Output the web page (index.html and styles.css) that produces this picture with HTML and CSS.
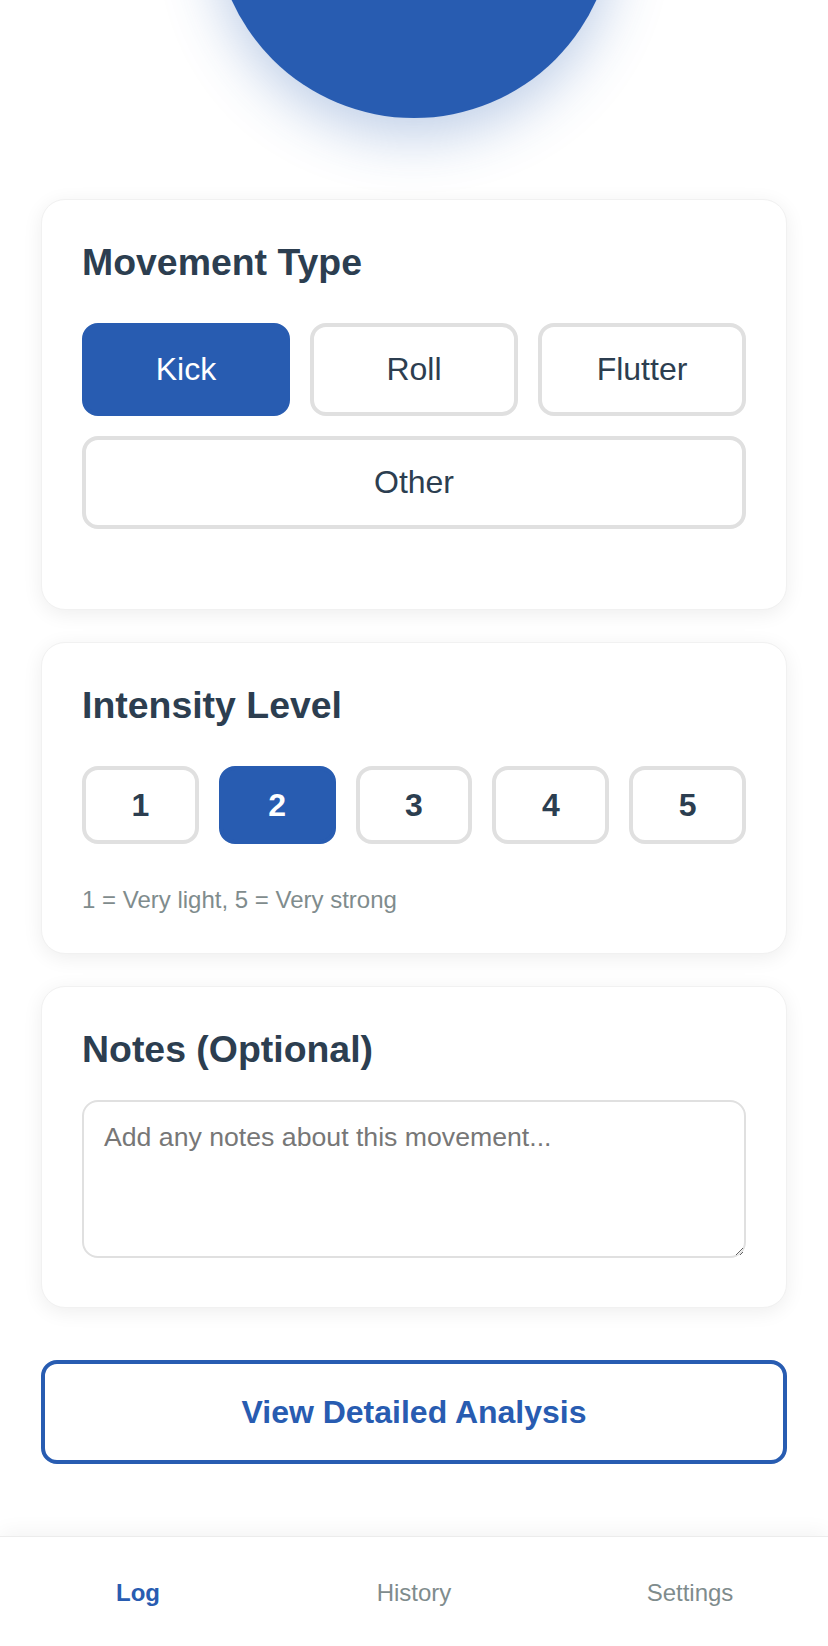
FILE: index.html
```html
<!DOCTYPE html>
<html lang="en">
<head>
<meta charset="utf-8">
<title>Log Movement</title>
<link rel="stylesheet" href="styles.css">
</head>
<body>
<main class="content">
  <div class="record-area">
    <div class="record-circle"></div>
  </div>

  <section class="card">
    <h3 class="card-title">Movement Type</h3>
    <div class="type-grid">
      <button class="opt opt-active">Kick</button>
      <button class="opt">Roll</button>
      <button class="opt">Flutter</button>
      <button class="opt opt-wide">Other</button>
    </div>
  </section>

  <section class="card">
    <h3 class="card-title">Intensity Level</h3>
    <div class="level-row">
      <button class="level">1</button>
      <button class="level level-active">2</button>
      <button class="level">3</button>
      <button class="level">4</button>
      <button class="level">5</button>
    </div>
    <p class="hint">1 = Very light, 5 = Very strong</p>
  </section>

  <section class="card">
    <h3 class="card-title card-title-notes">Notes (Optional)</h3>
    <textarea class="notes" placeholder="Add any notes about this movement..."></textarea>
  </section>

  <button class="analysis-btn">View Detailed Analysis</button>
</main>

<nav class="bottom-nav">
  <a class="nav-item nav-active">Log</a>
  <a class="nav-item">History</a>
  <a class="nav-item">Settings</a>
</nav>
</body>
</html>
```

FILE: styles.css
```css
* {
  box-sizing: border-box;
}

html, body {
  margin: 0;
  padding: 0;
}

body {
  height: 100vh;
  overflow: hidden;
  display: flex;
  flex-direction: column;
  background: #ffffff;
  font-family: "Liberation Sans", Arial, Helvetica, sans-serif;
  color: #2c3e50;
}

.content {
  flex: 1;
  min-height: 0;
  display: flex;
  flex-direction: column;
  padding: 0 41px;
}

.record-area {
  display: flex;
  justify-content: center;
  margin-top: -282px;
  margin-bottom: 81px;
}

.record-circle {
  width: 400px;
  height: 400px;
  border-radius: 50%;
  background: #285cb1;
  box-shadow: 0 18px 56px rgba(40, 92, 177, 0.3);
}

.card {
  background: #ffffff;
  border: 1px solid #f1f1f1;
  border-radius: 24px;
  padding: 40px;
  box-shadow: 0 4px 20px rgba(0, 0, 0, 0.07);
  margin-bottom: 32px;
}

.card-title {
  margin: 0 0 38px;
  font-size: 37.44px;
  line-height: 1.2;
  font-weight: 700;
  color: #2c3e50;
}

.card-title-notes {
  margin-bottom: 28px;
}

.type-grid {
  display: grid;
  grid-template-columns: 1fr 1fr 1fr;
  gap: 20px;
  margin-bottom: 40px;
}

.opt {
  font-family: inherit;
  font-size: 32px;
  line-height: 37px;
  padding: 24px 8px;
  border: 4px solid #e0e0e0;
  border-radius: 16px;
  background: #ffffff;
  color: #2c3e50;
}

.opt-wide {
  grid-column: 1 / -1;
}

.opt-active {
  background: #285cb1;
  border-color: #285cb1;
  color: #ffffff;
}

.level-row {
  display: flex;
  gap: 20px;
  margin-bottom: 42px;
}

.level {
  flex: 1;
  font-family: inherit;
  font-size: 32px;
  font-weight: 700;
  line-height: 38px;
  padding: 16px 0;
  border: 4px solid #e0e0e0;
  border-radius: 16px;
  background: #ffffff;
  color: #2c3e50;
}

.level-active {
  background: #285cb1;
  border-color: #285cb1;
  color: #ffffff;
}

.hint {
  margin: 0;
  font-size: 24px;
  line-height: 27.6px;
  color: #7f8c8d;
}

.notes {
  display: block;
  width: 100%;
  height: 158px;
  margin: 0 0 9px;
  padding: 20px;
  border: 2px solid #e0e0e0;
  border-radius: 16px;
  font-family: inherit;
  font-size: 26.67px;
  color: #2c3e50;
  background: #ffffff;
  resize: vertical;
}

.notes::placeholder {
  color: #777777;
}

.analysis-btn {
  display: block;
  width: 100%;
  margin-top: 20px;
  padding: 30px 0;
  font-family: inherit;
  font-size: 32px;
  line-height: 36px;
  font-weight: 700;
  color: #285cb1;
  background: #ffffff;
  border: 4px solid #285cb1;
  border-radius: 16px;
}

.bottom-nav {
  flex: 0 0 110px;
  display: grid;
  grid-template-columns: 1fr 1fr 1fr;
  align-items: center;
  background: #ffffff;
  border-top: 1px solid #ececec;
  box-shadow: 0 -4px 20px rgba(0, 0, 0, 0.05);
  padding-top: 3px;
}

.nav-item {
  text-align: center;
  font-size: 24px;
  color: #7f8c8d;
}

.nav-active {
  color: #285cb1;
  font-weight: 700;
}
```
